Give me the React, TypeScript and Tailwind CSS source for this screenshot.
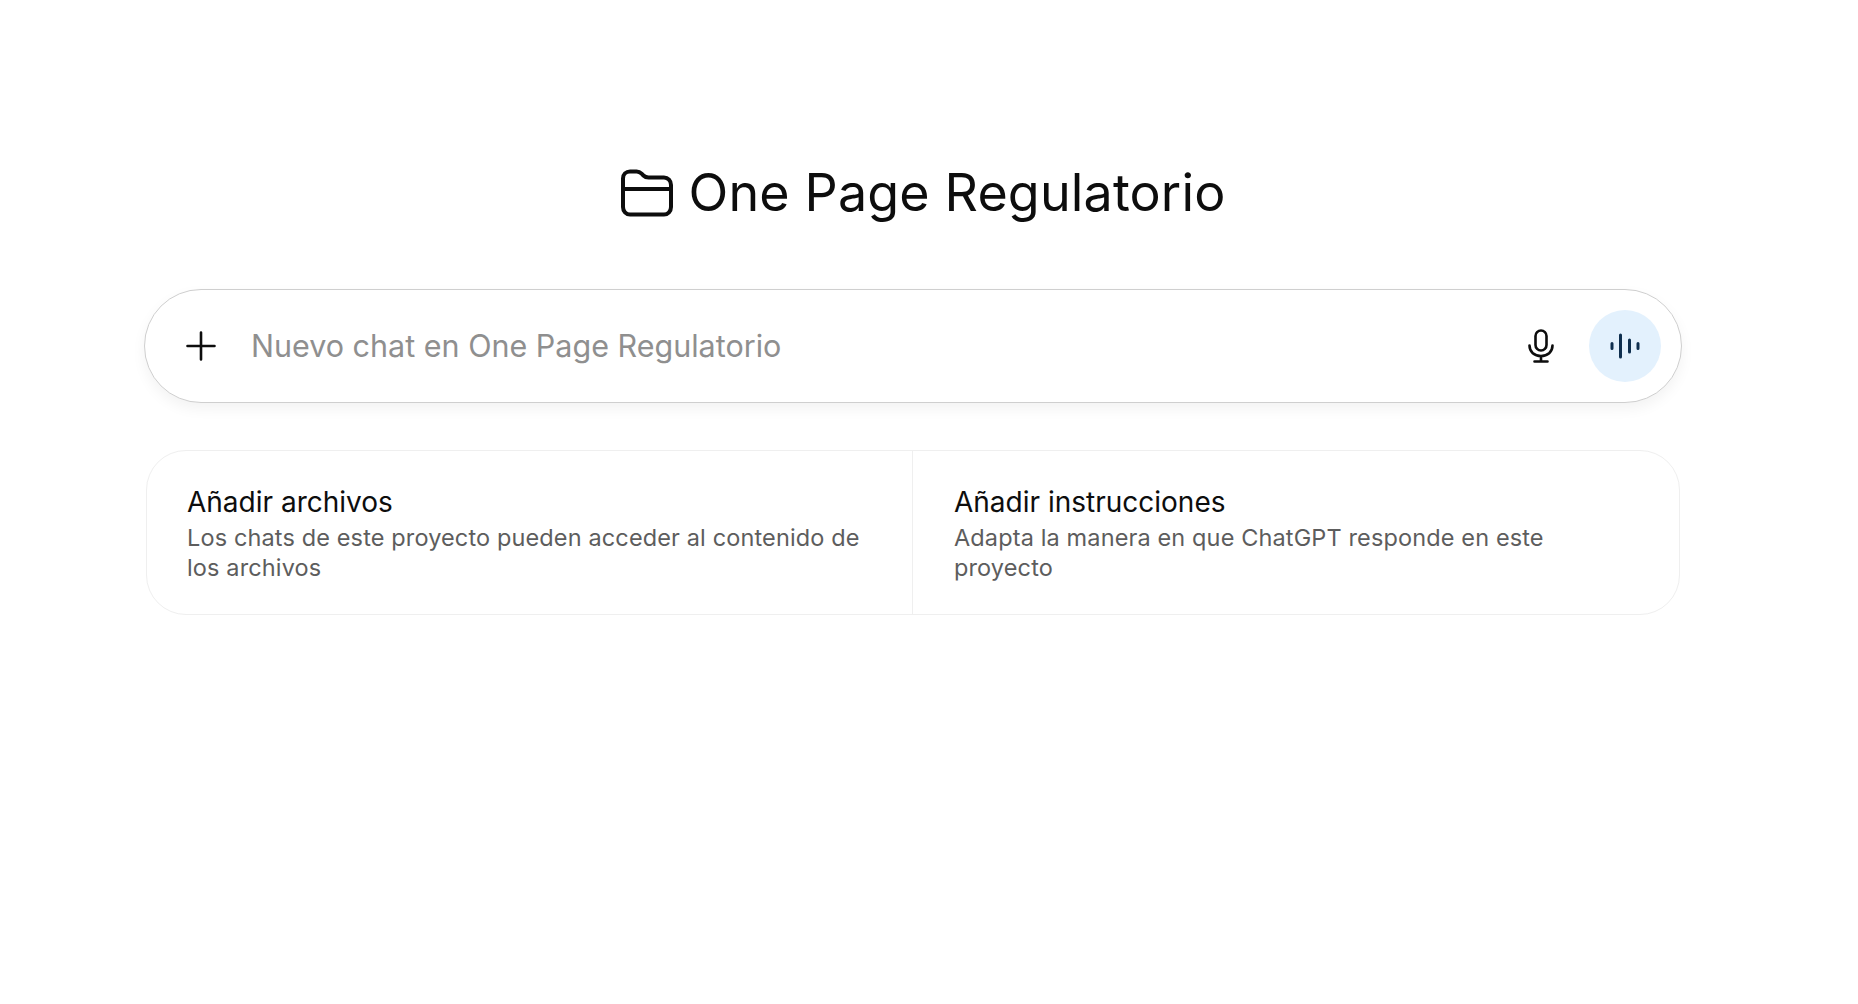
export default function App() {
  return (
    <div className="min-h-screen bg-white font-['Inter',sans-serif]">
      <div className="ml-[144px] w-[1538px] pt-[157px]">
        {/* Project title */}
        <div className="flex h-[72px] items-center justify-center gap-[16px] pl-[20px]">
          <svg width="52" height="48" viewBox="0 0 52 48" fill="none" stroke="#0d0d0d" strokeWidth="4" strokeLinejoin="round">
            <path d="M2 9.5C2 5.5 5 2.5 9 2.5H15.6C17.6 2.5 19.2 3.3 20.6 4.7L22.4 6.5C23.8 7.9 25.6 8.5 27.6 8.5H43C47 8.5 50 11.8 50 16V38C50 42.2 47 45.5 43 45.5H9C5 45.5 2 42.2 2 38V9.5Z" />
            <path d="M2 20H50" />
          </svg>
          <h1 className="text-[52px] leading-[72px] font-normal tracking-[0.15px] text-[#0d0d0d]">One Page Regulatorio</h1>
        </div>

        {/* Composer */}
        <div className="mt-[60px] flex h-[114px] items-center rounded-[57px] border border-[#cfcfcf] bg-white pl-[40px] pr-[20px] shadow-[0_6px_14px_rgba(0,0,0,0.05)]">
          <svg width="32" height="32" viewBox="0 0 32 32" fill="none" stroke="#0d0d0d" strokeWidth="2.6" strokeLinecap="round">
            <path d="M16 2.5V29.5M2.5 16H29.5" />
          </svg>
          <span className="ml-[34px] flex-1 text-[30.5px] leading-none text-[#8f8f8f]">Nuevo chat en One Page Regulatorio</span>
          <svg width="28" height="34" viewBox="0 0 28 34" fill="none" stroke="#0d0d0d" strokeWidth="2.6" strokeLinecap="round">
            <rect x="8.5" y="1.5" width="11" height="20" rx="5.5" />
            <path d="M2.5 16.5C2.5 23 7.5 27 14 27C20.5 27 25.5 23 25.5 16.5M14 27V32M7.5 32.5H20.5" />
          </svg>
          <div className="ml-[34px] flex h-[72px] w-[72px] items-center justify-center rounded-full bg-[#e3f1fd]">
            <svg width="30" height="26" viewBox="0 0 30 26" fill="none" stroke="#0f2f4f" strokeWidth="3" strokeLinecap="round">
              <path d="M2 10.5V15.5M10.5 2V24M19.5 7V19M28 10.5V15.5" />
            </svg>
          </div>
        </div>

        {/* Suggestion cards */}
        <div className="mx-[2px] mt-[47px] grid h-[165px] grid-cols-[766px_1fr] divide-x divide-[#efefef] rounded-[40px] border border-[#efefef]">
          <Card
            title="Añadir archivos"
            description="Los chats de este proyecto pueden acceder al contenido de los archivos"
            className="pl-[40px] pr-[30px]"
          />
          <Card
            title="Añadir instrucciones"
            description="Adapta la manera en que ChatGPT responde en este proyecto"
            className="pl-[41px] pr-[40px]"
          />
        </div>
      </div>
    </div>
  );
}

function Card({ title, description, className }: { title: string; description: string; className: string }) {
  return (
    <div className={`pt-[32px] ${className}`}>
      <div className="text-[28px] leading-[38px] text-[#0d0d0d]">{title}</div>
      <div className="mt-[2px] text-[23.5px] leading-[30px] tracking-[0.13px] text-[#5d5d5d]">{description}</div>
    </div>
  );
}
